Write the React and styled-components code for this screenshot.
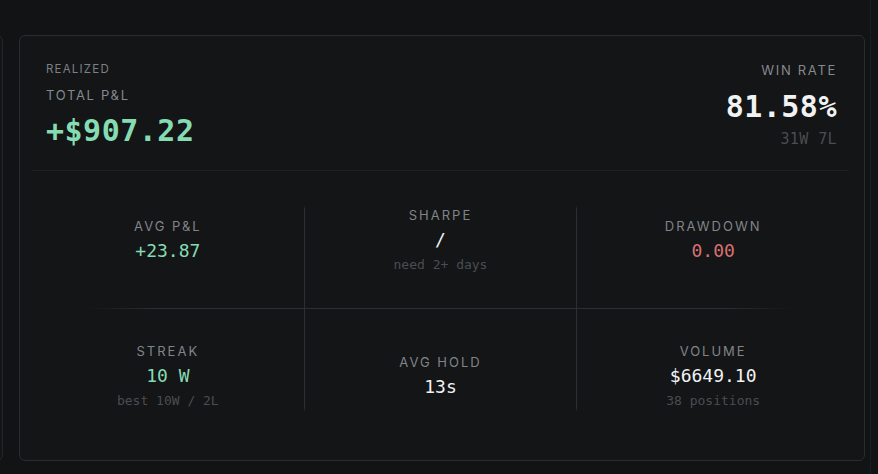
import React from 'react';
import styled, { createGlobalStyle } from 'styled-components';

const GlobalStyle = createGlobalStyle`
    html, body {
        margin: 0;
        padding: 0;
        background: #111315;
    }
    body {
        font-family: Inter, "Noto Sans", sans-serif;
    }
`;

const STATS = [
    { label: 'AVG P&L',  value: '+23.87',   tone: 'green' },
    { label: 'SHARPE',   value: '/',        tone: 'white', sub: 'need 2+ days' },
    { label: 'DRAWDOWN', value: '0.00',     tone: 'red' },
    { label: 'STREAK',   value: '10 W',     tone: 'green', sub: 'best 10W / 2L' },
    { label: 'AVG HOLD', value: '13s',      tone: 'white' },
    { label: 'VOLUME',   value: '$6649.10', tone: 'white', sub: '38 positions' },
];

const TONES = {
    green: '#86dcb2',
    red:   '#d8706f',
    white: '#f1f2f3',
};

const Stat = ({ label, value, tone, sub }) => (
    <Cell>
        <CellLabel>{label}</CellLabel>
        <CellValue $tone={tone}>{value}</CellValue>
        {sub && <CellSub>{sub}</CellSub>}
    </Cell>
);

const App = () => {
    const top = STATS.slice(0, 3);
    const bottom = STATS.slice(3);

    return (
        <>
            <GlobalStyle />
            <Page>
                <Frame>
                    <SideCard />
                    <Card>
                        <Header>
                            <HeadCol>
                                <Kicker>REALIZED</Kicker>
                                <HeadLabel>TOTAL P&amp;L</HeadLabel>
                                <BigValue $tone="green">+$907.22</BigValue>
                            </HeadCol>
                            <HeadCol $right>
                                <HeadLabel>WIN RATE</HeadLabel>
                                <BigValue $tone="white">81.58%</BigValue>
                                <Record>31W 7L</Record>
                            </HeadCol>
                        </Header>

                        <Grid>
                            <Stat {...top[0]} />
                            <VLine $col={2} />
                            <Stat {...top[1]} />
                            <VLine $col={4} />
                            <Stat {...top[2]} />
                            <HLine />
                            <Stat {...bottom[0]} />
                            <Stat {...bottom[1]} />
                            <Stat {...bottom[2]} />
                        </Grid>
                    </Card>
                </Frame>
            </Page>
        </>
    );
};

export default App;

/* ── Styles ──────────────────────────────────────────────────────────────── */

const Page = styled.div`
    width: 878px;
    height: 474px;
    background: #111315;
    overflow: hidden;
`;

/* outer column: its right edge is the faint line just past the card */
const Frame = styled.div`
    width: 871px;
    height: 100%;
    box-sizing: border-box;
    border-right: 1px solid #1c1f22;
    display: flex;
    justify-content: flex-end;
    gap: 16px;
    padding: 35px 5px 13px 0;
    overflow: hidden;
`;

const SideCard = styled.div`
    flex-shrink: 0;
    width: 300px;
    border: 1px solid #25282b;
    border-radius: 6px;
    background: #131517;
`;

const Card = styled.div`
    flex-shrink: 0;
    width: 846px;
    box-sizing: border-box;
    border: 1px solid #2a2d30;
    border-radius: 6px;
    background: #131517;
    padding: 0 15px 0 12px;
`;

const Header = styled.div`
    display: flex;
    justify-content: space-between;
    align-items: flex-start;
    padding: 26px 12px 21px 14px;
    border-bottom: 1px solid #1f2225;
`;

const HeadCol = styled.div`
    display: flex;
    flex-direction: column;
    align-items: ${p => (p.$right ? 'flex-end' : 'flex-start')};
    gap: ${p => (p.$right ? '11px' : '10px')};
`;

const Kicker = styled.div`
    font-size: 11.5px;
    line-height: 14px;
    letter-spacing: 1.2px;
    color: #7d8084;
    margin-bottom: 1px;
`;

const HeadLabel = styled.div`
    font-size: 13px;
    line-height: 16px;
    letter-spacing: 1.7px;
    color: #85888c;
`;

const BigValue = styled.div`
    font-family: "DejaVu Sans Mono", "Liberation Mono", monospace;
    font-weight: 700;
    font-size: 30px;
    line-height: 36px;
    letter-spacing: 0.5px;
    color: ${p => TONES[p.$tone]};
`;

const Record = styled.div`
    font-family: "DejaVu Sans Mono", "Liberation Mono", monospace;
    font-size: 15px;
    line-height: 18px;
    letter-spacing: 0.4px;
    color: #4a4d51;
    margin-top: -6px;
`;

const Grid = styled.div`
    display: grid;
    grid-template-columns: 1fr 1px 1fr 1px 1fr;
    grid-template-rows: 137px 1px 133px;
    padding-bottom: 3px;
`;

const Cell = styled.div`
    display: flex;
    flex-direction: column;
    align-items: center;
    justify-content: center;
    gap: 6px;
`;

const CellLabel = styled.div`
    font-size: 13px;
    line-height: 16px;
    letter-spacing: 2px;
    color: #818488;
`;

const CellValue = styled.div`
    font-family: "DejaVu Sans Mono", "Liberation Mono", monospace;
    font-size: 18px;
    line-height: 22px;
    color: ${p => TONES[p.$tone]};
`;

const CellSub = styled.div`
    font-family: "DejaVu Sans Mono", "Liberation Mono", monospace;
    font-size: 13px;
    line-height: 16px;
    color: #4a4d51;
`;

const VLine = styled.div`
    grid-column: ${p => p.$col};
    grid-row: 1 / 4;
    margin: 34px 0 30px;
    background: linear-gradient(to bottom, transparent, #2b2e32 2%, #2b2e32 98%, transparent);
`;

const HLine = styled.div`
    grid-column: 1 / 6;
    grid-row: 2;
    margin: 0 55px;
    background: linear-gradient(to right, transparent, #2b2e32 9%, #2b2e32 91%, transparent);
`;
